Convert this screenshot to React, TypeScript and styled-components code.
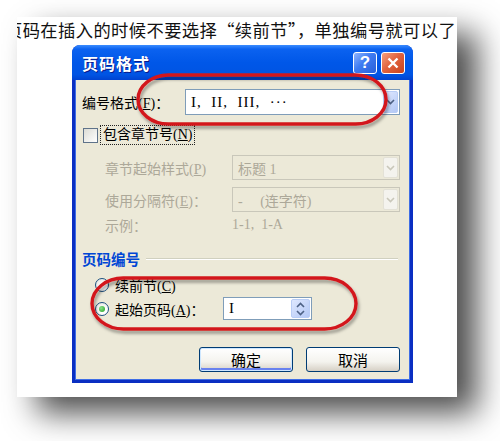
import * as React from "react";
import styled, { createGlobalStyle } from "styled-components";

const GlobalStyle = createGlobalStyle`
  html, body {
    margin: 0;
    padding: 0;
    background: #ffffff;
  }
  body {
    width: 500px;
    height: 441px;
    overflow: hidden;
  }
`;

const CJK = `"Noto Sans CJK SC", "Noto Sans", sans-serif`;
const DIALOG_FONT = `"Liberation Serif", "Noto Sans CJK SC", serif`;

const Stage = styled.div`
  width: 500px;
  height: 441px;
  box-sizing: border-box;
  padding: 17px 0 0 17px;
`;

const Paper = styled.div`
  position: relative;
  width: 440px;
  height: 380px;
  background: #ffffff;
  box-shadow: 20px 16px 30px rgba(0, 0, 0, 0.7);
  overflow: hidden;
  display: flex;
  flex-direction: column;
`;

const Caption = styled.div`
  height: 28px;
  margin-left: -12px;
  font-family: ${CJK};
  font-size: 17.3px;
  letter-spacing: 0.4px;
  line-height: 26px;
  color: #111;
  white-space: nowrap;
`;

const Window = styled.div`
  margin-left: 55px;
  width: 341px;
  height: 338px;
  box-sizing: border-box;
  display: flex;
  flex-direction: column;
  border-radius: 8px 8px 0 0;
  background: #0a2fc2;
  font-family: ${DIALOG_FONT};
  font-size: 14px;
  color: #000;
`;

const TitleBar = styled.div`
  height: 35px;
  flex: none;
  display: flex;
  align-items: center;
  justify-content: space-between;
  padding: 0 8px 0 10px;
  border-radius: 8px 8px 0 0;
  background: linear-gradient(
    #3b8cff 0%,
    #0b62f0 12%,
    #0057e8 50%,
    #0054e3 85%,
    #0042d0 100%
  );
`;

const Title = styled.span`
  font-family: ${CJK};
  font-size: 16px;
  font-weight: bold;
  color: #fff;
  text-shadow: 1px 1px 0 #0a1a8a;
  letter-spacing: 1px;
`;

const Caps = styled.div`
  display: flex;
  gap: 4px;
`;

const CapButton = styled.div<{ $close?: boolean }>`
  width: 24px;
  height: 22px;
  box-sizing: border-box;
  border: 1px solid #fff;
  border-radius: 3px;
  display: flex;
  align-items: center;
  justify-content: center;
  background: ${(p) =>
    p.$close
      ? "linear-gradient(135deg, #f4a07f 0%, #e2643f 45%, #c8421c 100%)"
      : "linear-gradient(135deg, #8fb4ff 0%, #3d7bf2 45%, #2a5fd8 100%)"};
  color: #fff;
  font-family: "Liberation Sans", sans-serif;
  font-weight: bold;
  font-size: 17px;
`;

const Body = styled.div`
  flex: 1;
  margin: 0 3px 3px;
  background: #ece9d8;
  box-shadow: inset 1px 0 0 #3f6ee6, inset -1px 0 0 #3f6ee6,
    inset 0 -1px 0 #3f6ee6;
  display: flex;
  flex-direction: column;
  padding: 0 10px 0 7px;
`;

const Row = styled.div<{ $top: number; $h: number; $indent?: number }>`
  display: flex;
  align-items: center;
  flex: none;
  margin-top: ${(p) => p.$top}px;
  height: ${(p) => p.$h}px;
  padding-left: ${(p) => p.$indent || 0}px;
`;

const Label = styled.span<{ $off?: boolean }>`
  flex: none;
  color: ${(p) => (p.$off ? "#aca899" : "#000")};
  white-space: nowrap;
`;

const Key = styled.span`
  text-decoration: underline;
`;

const Combo = styled.div<{ $w: number; $off?: boolean }>`
  width: ${(p) => p.$w}px;
  height: 100%;
  box-sizing: border-box;
  margin-left: auto;
  border: 1px solid ${(p) => (p.$off ? "#c9c7ba" : "#7f9db9")};
  background: ${(p) => (p.$off ? "#ece9d8" : "#fff")};
  display: flex;
  align-items: center;
  padding: 1px;
`;

const ComboText = styled.span<{ $off?: boolean; $big?: boolean }>`
  flex: 1;
  padding-left: 4px;
  font-size: ${(p) => (p.$big ? "15px" : "14px")};
  letter-spacing: ${(p) => (p.$big ? "1px" : "0")};
  color: ${(p) => (p.$off ? "#aca899" : "#000")};
  white-space: nowrap;
  overflow: hidden;
`;

const DropButton = styled.div<{ $off?: boolean }>`
  width: 15px;
  height: 100%;
  box-sizing: border-box;
  border: 1px solid ${(p) => (p.$off ? "#e3e1d6" : "#b9cdf6")};
  border-radius: 2px;
  background: ${(p) =>
    p.$off ? "#f4f3ee" : "linear-gradient(135deg, #dfe8ff, #b3c8f5)"};
  display: flex;
  align-items: center;
  justify-content: center;
`;

const Check = styled.div`
  width: 15px;
  height: 15px;
  box-sizing: border-box;
  border: 1px solid #5f738a;
  background: linear-gradient(135deg, #dcdcd5, #fff);
  margin: 0 2px 0 1px;
`;

const Focus = styled.span`
  border: 1px dotted #222;
  padding: 0 2px;
  line-height: 18px;
`;

const Value = styled.span`
  margin-left: auto;
  width: 168px;
  color: #aca899;
`;

const GroupHead = styled.div`
  display: flex;
  align-items: center;
  flex: none;
  margin-top: 17px;
  height: 16px;
  padding-right: 2px;
  color: #0046d5;
  font-family: ${CJK};
  font-weight: bold;
  font-size: 14.5px;
  &::after {
    content: "";
    flex: 1;
    margin-left: 6px;
    height: 1px;
    background: #d0d0bf;
    box-shadow: 0 1px 0 #fff;
  }
`;

const Radio = styled.div<{ $on?: boolean }>`
  width: 14px;
  height: 14px;
  box-sizing: border-box;
  border-radius: 50%;
  border: 1px solid #1c5180;
  background: radial-gradient(circle at 65% 65%, #fff 30%, #dcdcd5 100%);
  display: flex;
  align-items: center;
  justify-content: center;
  margin-right: 6px;
  &::after {
    content: "";
    display: ${(p) => (p.$on ? "block" : "none")};
    width: 6px;
    height: 6px;
    border-radius: 50%;
    background: radial-gradient(circle at 35% 35%, #8be28b, #21a121);
  }
`;

const SpinBox = styled.div`
  margin-left: auto;
  margin-right: 88px;
  width: 89px;
  height: 100%;
  box-sizing: border-box;
  border: 1px solid #7f9db9;
  background: #fff;
  display: flex;
  align-items: center;
  padding: 1px;
`;

const SpinButtons = styled.div`
  width: 19px;
  height: 100%;
  box-sizing: border-box;
  border: 1px solid #b9cdf6;
  border-radius: 2px;
  background: linear-gradient(135deg, #dfe8ff, #b3c8f5);
  display: flex;
  align-items: center;
  justify-content: center;
`;

const Buttons = styled.div`
  display: flex;
  justify-content: flex-end;
  gap: 13px;
  flex: none;
  margin-top: 27px;
  height: 25px;
`;

const PushButton = styled.div<{ $default?: boolean }>`
  width: 94px;
  height: 25px;
  box-sizing: border-box;
  border: 1px solid #003c74;
  border-radius: 3px;
  background: linear-gradient(#ffffff 0%, #f4f3ee 60%, #d6d0c5 100%);
  box-shadow: ${(p) =>
    p.$default
      ? "inset 0 0 0 1px #cee7ff, inset 0 -2px 0 1px #6982ee"
      : "inset 0 -1px 0 #d6d0c5"};
  display: flex;
  align-items: center;
  justify-content: center;
  font-family: ${CJK};
  font-size: 15px;
`;

const Mark = styled.svg<{ $x: number; $y: number }>`
  position: absolute;
  left: ${(p) => p.$x}px;
  top: ${(p) => p.$y}px;
  overflow: visible;
  pointer-events: none;
`;

const Chevron = ({ off }: { off?: boolean }) => (
  <svg width="9" height="6" viewBox="0 0 9 6">
    <path
      d="M1 1 L4.5 4.5 L8 1"
      fill="none"
      stroke={off ? "#c9c7ba" : "#4d6185"}
      strokeWidth="1.6"
    />
  </svg>
);

const Spinner = () => (
  <svg width="9" height="14" viewBox="0 0 9 14">
    <path d="M1 5 L4.5 1.5 L8 5" fill="none" stroke="#4d6185" strokeWidth="1.6" />
    <path d="M1 9 L4.5 12.5 L8 9" fill="none" stroke="#4d6185" strokeWidth="1.6" />
  </svg>
);

const Ring = ({ x, y, w, h }: { x: number; y: number; w: number; h: number }) => (
  <Mark $x={x} $y={y} width={w} height={h} viewBox={`0 0 ${w} ${h}`}>
    <defs>
      <filter id={`sh${x}`} x="-10%" y="-20%" width="120%" height="150%">
        <feDropShadow dx="1.5" dy="3" stdDeviation="1.5" floodColor="#000" floodOpacity="0.35" />
      </filter>
    </defs>
    <rect
      x="2"
      y="2"
      width={w - 4}
      height={h - 4}
      rx={h / 2 + 4}
      ry={h / 2 - 2}
      fill="none"
      stroke="#d3171c"
      strokeWidth="3.4"
      filter={`url(#sh${x})`}
    />
  </Mark>
);

export default function App() {
  return (
    <Stage>
      <GlobalStyle />
      <Paper lang="zh-CN">
        <Caption>页码在插入的时候不要选择“续前节”，单独编号就可以了</Caption>
        <Window>
          <TitleBar>
            <Title>页码格式</Title>
            <Caps>
              <CapButton>?</CapButton>
              <CapButton $close>
                <svg width="12" height="12" viewBox="0 0 12 12">
                  <path d="M1.5 1.5 L10.5 10.5 M10.5 1.5 L1.5 10.5" stroke="#fff" strokeWidth="2.4" />
                </svg>
              </CapButton>
            </Caps>
          </TitleBar>
          <Body>
            <Row $top={9} $h={26}>
              <Label>
                编号格式(<Key>F</Key>)：
              </Label>
              <Combo $w={215}>
                <ComboText $big>I,&nbsp; II,&nbsp; III,&nbsp; ···</ComboText>
                <DropButton>
                  <Chevron />
                </DropButton>
              </Combo>
            </Row>
            <Row $top={10} $h={20}>
              <Check />
              <Focus>
                包含章节号(<Key>N</Key>)
              </Focus>
            </Row>
            <Row $top={10} $h={25} $indent={23}>
              <Label $off>
                章节起始样式(<Key>P</Key>)
              </Label>
              <Combo $w={168} $off>
                <ComboText $off>标题 1</ComboText>
                <DropButton $off>
                  <Chevron off />
                </DropButton>
              </Combo>
            </Row>
            <Row $top={7} $h={25} $indent={23}>
              <Label $off>
                使用分隔符(<Key>E</Key>)：
              </Label>
              <Combo $w={168} $off>
                <ComboText $off>-&nbsp;&nbsp;&nbsp;&nbsp; (连字符)</ComboText>
                <DropButton $off>
                  <Chevron off />
                </DropButton>
              </Combo>
            </Row>
            <Row $top={5} $h={16} $indent={23}>
              <Label $off>示例：</Label>
              <Value>1-1,&nbsp; 1-A</Value>
            </Row>
            <GroupHead>页码编号</GroupHead>
            <Row $top={11} $h={16} $indent={13}>
              <Radio />
              <Label>
                续前节(<Key>C</Key>)
              </Label>
            </Row>
            <Row $top={4} $h={23} $indent={13}>
              <Radio $on />
              <Label>
                起始页码(<Key>A</Key>)：
              </Label>
              <SpinBox>
                <ComboText $big>I</ComboText>
                <SpinButtons>
                  <Spinner />
                </SpinButtons>
              </SpinBox>
            </Row>
            <Buttons>
              <PushButton $default>确定</PushButton>
              <PushButton>取消</PushButton>
            </Buttons>
          </Body>
        </Window>
        <Ring x={119} y={56} w={252} h={53} />
        <Ring x={73} y={259} w={268} h={55} />
      </Paper>
    </Stage>
  );
}
